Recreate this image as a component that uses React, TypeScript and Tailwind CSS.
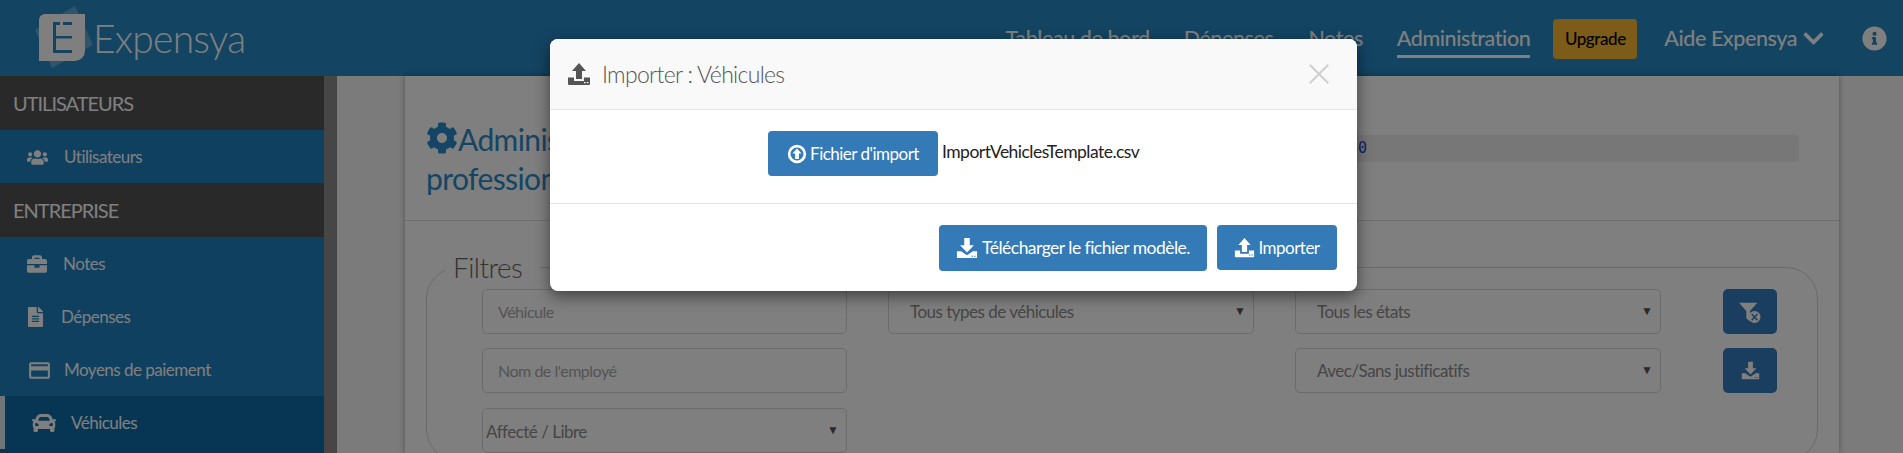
import {
  FaBriefcase,
  FaCar,
  FaChevronDown,
  FaCog,
  FaFileAlt,
  FaInfoCircle,
  FaUsers,
} from "react-icons/fa";
import { MdCreditCard } from "react-icons/md";

function UploadIcon({ className }: { className?: string }) {
  return (
    <svg viewBox="0 0 24 24" className={className} fill="currentColor">
      <path d="M12 1l7 8h-4v8H9V9H5z" />
      <path
        fillRule="evenodd"
        d="M1 15.5h6V19h10v-3.5h6V22a1 1 0 0 1-1 1H2a1 1 0 0 1-1-1zM17 20v1.2h1.6V20zm2.8 0v1.2h1.6V20z"
      />
    </svg>
  );
}

function DownloadIcon({ className }: { className?: string }) {
  return (
    <svg viewBox="0 0 24 24" className={className} fill="currentColor">
      <path d="M9 1h6v8h4.5L12 17 4.5 9H9z" />
      <path
        fillRule="evenodd"
        d="M1 15.5h4.5L12 20l6.500-4.500H23V23H1zM17 20.500v1h1.600v-1zm2.800 0v1h1.600v-1z"
      />
    </svg>
  );
}

function CircleUpIcon({ className }: { className?: string }) {
  return (
    <svg viewBox="0 0 24 24" className={className} fill="currentColor">
      <path
        fillRule="evenodd"
        d="M12 1a11 11 0 1 1 0 22 11 11 0 0 1 0-22zm0 3.200a7.800 7.800 0 1 0 0 15.600 7.800 7.800 0 0 0 0-15.600z"
      />
      <path d="M12 5.500l5.500 6h-3.200V18H9.700v-6.500H6.500z" />
    </svg>
  );
}

function FilterRemoveIcon({ className }: { className?: string }) {
  return (
    <svg viewBox="0 0 24 24" className={className} fill="currentColor">
      <path d="M0 2h20l-8 9v11l-4-3v-8z" />
      <path
        fillRule="evenodd"
        d="M17 11a6.500 6.500 0 1 1 0 13 6.500 6.500 0 0 1 0-13zm-2.600 2.500l-1.100 1.100 2.600 2.900-2.600 2.900 1.100 1.100 2.600-2.800 2.600 2.800 1.100-1.100-2.600-2.900 2.600-2.900-1.100-1.100-2.600 2.800z"
      />
    </svg>
  );
}

function LogoMark() {
  return (
    <svg viewBox="0 0 58 62" className="h-[62px] w-[58px] overflow-visible">
      <path d="M2 23 L42 -1 L60 38 L19 61 Z" fill="#ffffff" opacity="0.28" />
      <path d="M12 7 H52 V44 a10 10 0 0 1 -10 10 H6 V13 a6 6 0 0 1 6 -6 Z" fill="#ffffff" />
      <path
        d="M20 15 H27 V18 H23 V29 H39 V31.500 H23 V43 H39 V46 H20 Z M30 15 H39 V18 H30 Z"
        fill="#2688c4"
      />
    </svg>
  );
}

const sidebarItems = [
  { label: "Notes", icon: <FaBriefcase className="h-[20px] w-[20px]" />, gap: "ml-[16px]" },
  { label: "Dépenses", icon: <FaFileAlt className="h-[20px] w-[17px]" />, gap: "ml-[17px]" },
  { label: "Moyens de paiement", icon: <MdCreditCard className="h-[25px] w-[25px]" />, gap: "ml-[12px]" },
];

function SectionTitle({ children }: { children: string }) {
  return (
    <div className="flex h-[54px] items-center bg-[#525252] pl-[13px] text-[20px] tracking-[-0.05em] text-white">
      {children}
    </div>
  );
}

function Field({ placeholder }: { placeholder: string }) {
  return (
    <input
      placeholder={placeholder}
      className="h-[45px] w-full rounded-[5px] border border-[#d6d6d6] bg-white px-[15px] text-[16px] tracking-[-0.03em] placeholder:text-[#a8a8a8]"
    />
  );
}

function Choice({ label, tight }: { label: string; tight?: boolean }) {
  return (
    <div className={tight ? "relative mt-[1px] h-[45px]" : "relative h-[45px]"}>
      <select
        className={
          "h-full w-full appearance-none rounded-[5px] border border-[#d6d6d6] bg-white text-[17px] tracking-[-0.03em] text-[#8c8c8c] " +
          (tight ? "px-[3px] pt-[2px]" : "px-[21px]")
        }
      >
        <option>{label}</option>
      </select>
      <span className="absolute right-[8px] top-[15px] text-[12px] leading-[14px] text-[#555]">▼</span>
    </div>
  );
}

export default function App() {
  return (
    <div className="relative h-[453px] overflow-hidden bg-[#f7f7f7] font-['Lato',sans-serif]">
      <header className="flex h-[76px] items-center justify-between bg-[#2688c4] pr-[16px] text-white">
        <div className="flex items-center pl-[33px] text-[#ffffff]">
          <LogoMark />
          <span className="ml-[2px] text-[39px] font-light tracking-[-0.02em]">Expensya</span>
        </div>
        <nav className="flex items-center pt-[1px] text-[21.5px] font-medium tracking-[-0.02em]">
          <a className="mr-[34px]">Tableau de bord</a>
          <a className="mr-[35px]">Dépenses</a>
          <a className="mr-[34px]">Notes</a>
          <a className="mr-[23px] border-b-[3px] border-white pt-[3px]">Administration</a>
          <a className="mr-[27px] flex h-[40px] w-[84px] items-center justify-center rounded-[4px] bg-[#f8b830] text-[17px] text-black">
            Upgrade
          </a>
          <a className="mr-[37px] flex items-center">
            Aide Expensya
            <FaChevronDown className="ml-[5px] h-[23px] w-[23px]" />
          </a>
          <FaInfoCircle className="h-[25px] w-[25px]" />
        </nav>
      </header>

      <div className="flex h-[377px]">
        <aside className="w-[324px] shrink-0 bg-[#1e80c0] text-white">
          <SectionTitle>UTILISATEURS</SectionTitle>
          <div className="flex h-[53px] items-center pl-[27px] pt-[1px] text-[17px] tracking-[-0.03em]">
            <FaUsers className="h-[21px] w-[21px]" />
            <span className="ml-[16px]">Utilisateurs</span>
          </div>
          <SectionTitle>ENTREPRISE</SectionTitle>
          {sidebarItems.map((item) => (
            <div key={item.label} className="flex h-[53px] items-center pl-[27px] pt-[1px] text-[17px] tracking-[-0.03em]">
              {item.icon}
              <span className={item.gap}>{item.label}</span>
            </div>
          ))}
          <div className="h-[57px] bg-[#0e6caa] text-[17px] tracking-[-0.03em]">
            <div className="flex h-[53px] items-center border-l-[5px] border-[#dfeaf2] pl-[27px] pt-[1px]">
              <FaCar className="h-[24px] w-[24px]" />
              <span className="ml-[15px]">Véhicules</span>
            </div>
          </div>
        </aside>
        <div className="w-[13px] shrink-0 bg-[#8c8c8c]" />

        <main className="min-w-0 flex-1 pl-[68px] pr-[64px]">
          <div className="h-full bg-white shadow-[0_0_6px_rgba(0,0,0,0.35)]">
            <div className="flex h-[145px] justify-between border-b border-[#dcdcdc] pl-[21px] pr-[40px]">
              <h1 className="w-[420px] pt-[44px] text-[30px] leading-[39px] tracking-[-0.02em] text-[#2a8ac8]">
                <FaCog className="inline-block h-[32px] w-[32px] align-[-3px]" />
                Administration des véhicules professionnels
              </h1>
              <div className="mt-[59px] flex h-[27px] w-[882px] items-center justify-center rounded-[4px] bg-[#eeeeee] font-['DejaVu_Sans_Mono',monospace] text-[15px] text-[#1a48d0]">
                80
              </div>
            </div>
            <div className="px-[21px] pt-[28px]">
              <fieldset className="h-[212px] rounded-[32px] border border-[#d4d4d4]">
                <legend className="ml-[18px] pl-[8px] pr-[18px] text-[28px] font-light leading-[36px] tracking-[-0.02em] text-[#666]">
                  Filtres
                </legend>
                <div className="mt-[4px] grid grid-cols-[365px_366px_366px_54px] gap-x-[41px] gap-y-[14px] pl-[55px]">
                  <Field placeholder="Véhicule" />
                  <Choice label="Tous types de véhicules" />
                  <Choice label="Tous les états" />
                  <button className="ml-[21px] flex h-[45px] w-[54px] items-center justify-center rounded-[5px] bg-[#347cbe] text-white">
                    <FilterRemoveIcon className="h-[22px] w-[22px]" />
                  </button>
                  <Field placeholder="Nom de l'employé" />
                  <div />
                  <Choice label="Avec/Sans justificatifs" />
                  <button className="ml-[21px] flex h-[45px] w-[54px] items-center justify-center rounded-[5px] bg-[#347cbe] text-white">
                    <DownloadIcon className="h-[19px] w-[19px]" />
                  </button>
                  <Choice label="Affecté / Libre" tight />
                </div>
              </fieldset>
            </div>
          </div>
        </main>
      </div>

      <div className="absolute inset-0 bg-black/50" />

      <div className="absolute left-[550px] top-[39px] h-[252px] w-[807px] overflow-hidden rounded-[8px] bg-white shadow-[0_5px_15px_rgba(0,0,0,0.5)]">
        <div className="flex h-[71px] items-center justify-between border-b border-[#e5e5e5] bg-[#f9f9f9] pl-[17px] pr-[28px]">
          <div className="flex items-center text-[#555]">
            <UploadIcon className="h-[24px] w-[24px]" />
            <span className="ml-[11px] text-[23px] font-light tracking-[-0.03em]">Importer : Véhicules</span>
          </div>
          <svg viewBox="0 0 20 20" className="h-[20px] w-[20px] text-[#cfcfcf]" fill="none" stroke="currentColor" strokeWidth="2">
            <path d="M0.700 0.700L19.300 19.300M19.300 0.700L0.700 19.300" />
          </svg>
        </div>
        <div className="flex h-[94px] items-start border-b border-[#e5e5e5] pl-[218px] pt-[21px]">
          <button className="flex h-[45px] w-[170px] items-center justify-center rounded-[4px] bg-[#337ab7] text-[17px] tracking-[-0.03em] text-white">
            <CircleUpIcon className="mr-[3px] h-[20px] w-[20px]" />
            Fichier d'import
          </button>
          <span className="ml-[4px] pt-[8px] text-[17.5px] tracking-[-0.03em] text-[#222]">ImportVehiclesTemplate.csv</span>
        </div>
        <div className="flex justify-end gap-[10px] pr-[20px] pt-[21px]">
          <button className="flex h-[46px] w-[268px] items-center justify-center rounded-[4px] bg-[#337ab7] text-[17.5px] tracking-[-0.03em] text-white">
            <DownloadIcon className="mr-[4px] h-[22px] w-[22px]" />
            Télécharger le fichier modèle.
          </button>
          <button className="flex h-[45px] w-[120px] items-center justify-center rounded-[4px] bg-[#337ab7] text-[17px] tracking-[-0.03em] text-white">
            <UploadIcon className="mr-[3px] h-[21px] w-[21px]" />
            Importer
          </button>
        </div>
      </div>
    </div>
  );
}
